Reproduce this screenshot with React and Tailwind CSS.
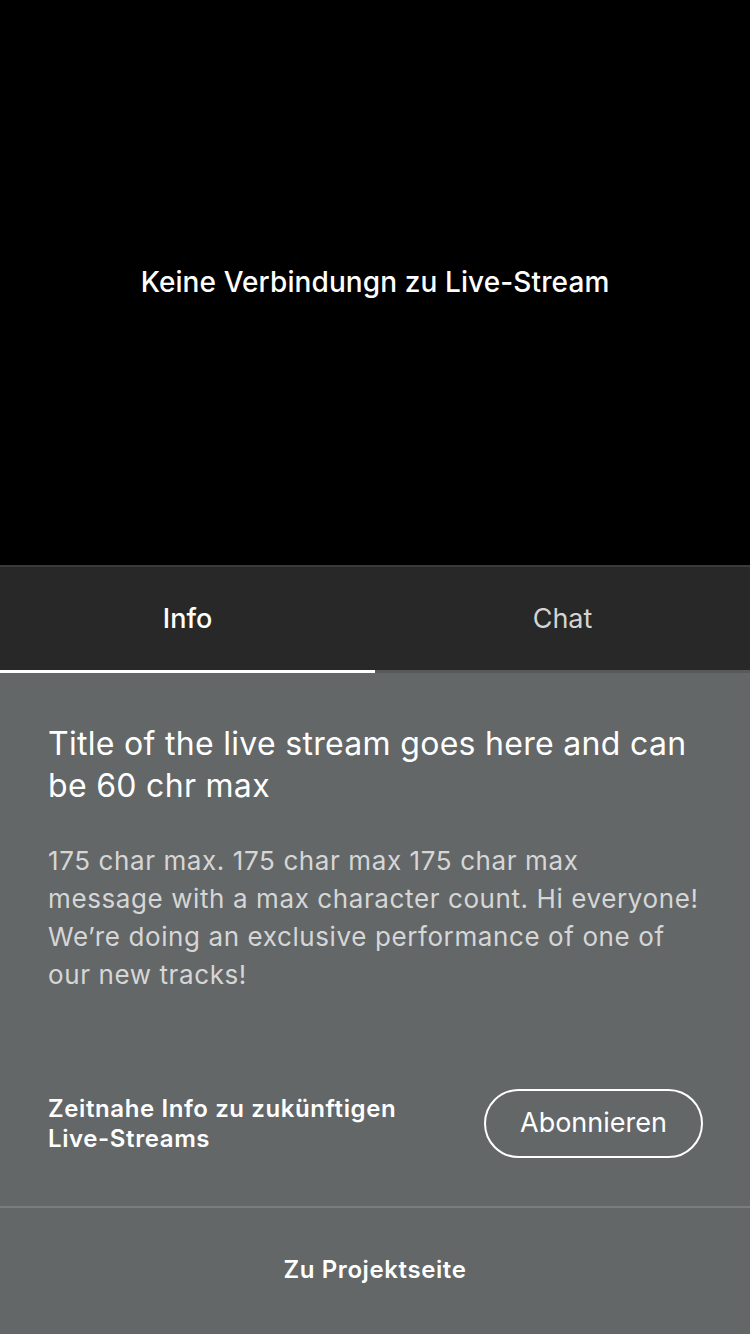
import React from 'react';

const App = () => {
  return (
    <div className="w-[750px] h-[1334px] flex flex-col bg-[#636768] overflow-hidden" style={{ fontFamily: 'Inter, "Noto Sans", sans-serif' }}>
      {/* Video area */}
      <div className="h-[565px] bg-black flex items-center justify-center">
        <p className="text-white text-[28px] font-medium -mt-[2px] tracking-[0.1px]">Keine Verbindungn zu Live-Stream</p>
      </div>

      {/* Tabs */}
      <div className="border-t-2 border-[#3a3a3a] bg-[#282828]">
        <div className="flex h-[103px] pt-[2px]">
          <button className="flex-1 flex items-center justify-center text-white text-[27px] font-medium">Info</button>
          <button className="flex-1 flex items-center justify-center text-[#d4d4d4] text-[27px]">Chat</button>
        </div>
        <div className="flex h-[3px]">
          <div className="w-1/2 bg-white" />
          <div className="w-1/2 bg-[#57595a]" />
        </div>
      </div>

      {/* Info content */}
      <div className="flex-1 flex flex-col">
        <div className="px-12 pt-[50px]">
          <h1 className="text-white text-[32px] leading-[42px] tracking-[0.3px] whitespace-nowrap">
            Title of the live stream goes here and can<br />be 60 chr max
          </h1>
          <p className="mt-[35px] text-[#d6d6d6] text-[26px] leading-[38px] tracking-[0.6px] whitespace-nowrap">
            175 char max. 175 char max 175 char max<br />
            message with a max character count. Hi everyone!<br />
            We’re doing an exclusive performance of one of<br />
            our new tracks!
          </p>
        </div>

        <div className="mt-auto px-12 pb-[48px] flex items-center justify-between">
          <p className="text-white text-[24px] leading-[30px] font-semibold tracking-[0.6px] whitespace-nowrap">
            Zeitnahe Info zu zukünftigen<br />Live-Streams
          </p>
          <button className="w-[219px] h-[69px] rounded-full border-2 border-white text-white text-[27px] -mr-[1px]">Abonnieren</button>
        </div>

        <div className="h-[2px] bg-[#7a7d7e]" />
        <div className="h-[126px] flex items-center justify-center">
          <span className="text-white text-[24px] font-semibold tracking-[0.6px] -mt-[2px]">Zu Projektseite</span>
        </div>
      </div>
    </div>
  );
};

export default App;
